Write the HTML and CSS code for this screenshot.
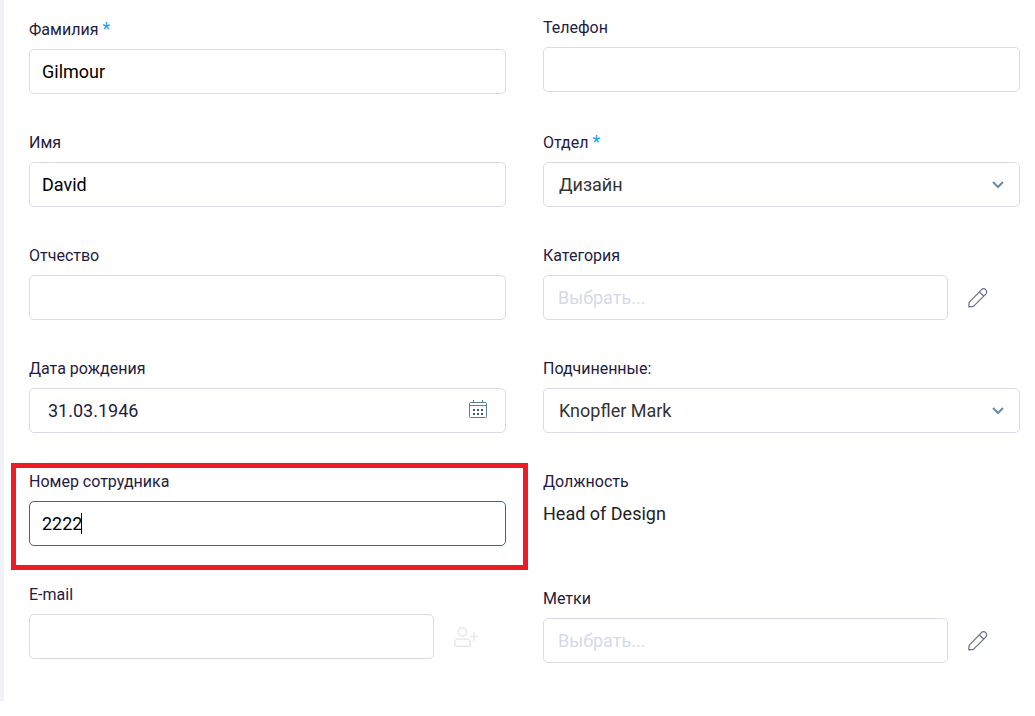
FILE: index.html
```html
<!DOCTYPE html>
<html lang="ru">
<head>
<meta charset="UTF-8">
<meta name="viewport" content="width=device-width, initial-scale=1.0">
<title>Сотрудник</title>
<link rel="stylesheet" href="styles.css">
</head>
<body>

<form class="employee-form">
    <div class="column">
        <div class="field">
            <label for="surname">Фамилия <span class="required">*</span></label>
            <input type="text" id="surname" name="surname" value="Gilmour" required>
        </div>
        <div class="field">
            <label for="name">Имя</label>
            <input type="text" id="name" name="name" value="David">
        </div>
        <div class="field">
            <label for="patronymic">Отчество</label>
            <input type="text" id="patronymic" name="patronymic">
        </div>
        <div class="field">
            <label for="birthday">Дата рождения</label>
            <div class="control">
                <input type="text" class="date" id="birthday" name="birthday" value="31.03.1946">
                <button type="button" class="calendar-button" aria-label="Календарь">
                    <svg width="18" height="20" viewBox="0 0 18 20" fill="none" stroke="#5b7f95">
                        <rect x="0.5" y="3.5" width="17" height="15" rx="1"/>
                        <path d="M1 6.500h16M4.500 1v3M13.500 1v3"/>
                        <path d="M4 11h2M8 11h2M12 11h2M4 15h2M8 15h2M12 15h2" stroke="#44566c" stroke-width="2"/>
                    </svg>
                </button>
            </div>
        </div>
        <div class="field highlight">
            <label for="number">Номер сотрудника</label>
            <div class="control">
                <input type="text" class="active" id="number" name="number" value="2222">
                <span class="caret"></span>
            </div>
        </div>
        <div class="field">
            <label for="email">E-mail</label>
            <div class="with-action">
                <input type="email" id="email" name="email">
                <button type="button" class="action" aria-label="Пригласить" disabled>
                    <svg width="24" height="20" viewBox="0 0 24 20" fill="none" stroke="#e6e8f0" stroke-width="1.5">
                        <circle cx="8.5" cy="5" r="4.2"/>
                        <path d="M0.8 19.2v-3.2c0-2.6 1.6-4 4-4h7.4c2.4 0 4 1.4 4 4v3.2zM20 5v9M16 9.500h8"/>
                    </svg>
                </button>
            </div>
        </div>
    </div>

    <div class="column column-right">
        <div class="field field-phone">
            <label for="phone">Телефон</label>
            <input type="tel" id="phone" name="phone">
        </div>
        <div class="field">
            <label for="department">Отдел <span class="required">*</span></label>
            <div class="control">
                <select id="department" name="department">
                    <option>Дизайн</option>
                </select>
                <svg class="chevron" width="12" height="8" viewBox="0 0 12 8" fill="none" stroke="#6a8ba5" stroke-width="2"><path d="M1 1l5 5 5-5"/></svg>
            </div>
        </div>
        <div class="field">
            <label for="category">Категория</label>
            <div class="with-action">
                <input type="text" class="picker" id="category" name="category" placeholder="Выбрать...">
                <button type="button" class="action" aria-label="Изменить категорию">
                    <svg width="20" height="20" viewBox="0 0 20 20" fill="none" stroke="#66708a" stroke-width="1.2" stroke-linejoin="round"><path d="M0.800 18.800l0.300-4.500L13.300 1.800c1.400-1.400 3.200-1.300 4.400-0.100s1.400 3.200 0.100 4.500L5.400 18.400zM11.300 3.900l4.600 4.400"/></svg>
                </button>
            </div>
        </div>
        <div class="field">
            <label for="subordinates">Подчиненные:</label>
            <div class="control">
                <select id="subordinates" name="subordinates">
                    <option>Knopfler Mark</option>
                </select>
                <svg class="chevron" width="12" height="8" viewBox="0 0 12 8" fill="none" stroke="#6a8ba5" stroke-width="2"><path d="M1 1l5 5 5-5"/></svg>
            </div>
        </div>
        <div class="field field-text">
            <span class="label">Должность</span>
            <span class="value">Head of Design</span>
        </div>
        <div class="field">
            <label for="tags">Метки</label>
            <div class="with-action">
                <input type="text" class="picker" id="tags" name="tags" placeholder="Выбрать...">
                <button type="button" class="action" aria-label="Изменить метки">
                    <svg width="20" height="20" viewBox="0 0 20 20" fill="none" stroke="#66708a" stroke-width="1.2" stroke-linejoin="round"><path d="M0.800 18.800l0.300-4.500L13.300 1.800c1.400-1.400 3.200-1.300 4.400-0.100s1.400 3.200 0.100 4.500L5.400 18.400zM11.300 3.900l4.600 4.400"/></svg>
                </button>
            </div>
        </div>
    </div>
</form>

</body>
</html>
```
FILE: styles.css
```css
* {
    box-sizing: border-box;
}
body {
    margin: 0;
    background-color: #fff;
    font-family: Roboto, sans-serif;
    color: #1f2041;
}
.employee-form {
    display: grid;
    grid-template-columns: 1fr 1fr;
    align-items: start;
    column-gap: 37px;
    padding: 0 15px 38px 25px;
    border-left: 4px solid #f1f2f9;
}
.column {
    display: flex;
    flex-direction: column;
    gap: 38px;
    padding-top: 19px;
}
.column-right {
    padding-top: 17px;
}
.field {
    display: flex;
    flex-direction: column;
    gap: 8px;
    position: relative;
}
.field-phone {
    margin-bottom: 2px;
}
.field-text {
    min-height: 79px;
}
label,
.label {
    font-size: 16px;
    line-height: 22px;
}
.required {
    font-size: 18px;
    line-height: 1;
    color: #18a0fb;
}
.value {
    font-size: 18px;
    line-height: 26px;
    color: #222;
}
input,
select {
    display: block;
    width: 100%;
    height: 45px;
    padding: 0 12px;
    border: 1px solid #d9dbea;
    border-radius: 5px;
    background-color: #fff;
    font-family: inherit;
    font-size: 18px;
    color: #000;
    outline: none;
}
select {
    appearance: none;
    padding: 0 40px 0 15px;
    color: #333;
}
input:focus,
input.active {
    border-color: #1079ab;
}
input.date {
    padding: 0 48px 0 18px;
    color: #1f2041;
}
input.picker {
    padding-left: 14px;
}
input::placeholder {
    color: #d5d9ea;
}
.control {
    position: relative;
}
.chevron {
    position: absolute;
    right: 16px;
    top: 19px;
    pointer-events: none;
}
.calendar-button {
    position: absolute;
    right: 19px;
    top: 11px;
}
.caret {
    position: absolute;
    left: 52px;
    top: 12px;
    width: 1px;
    height: 21px;
    background-color: #000;
}
button {
    display: flex;
    padding: 0;
    border: none;
    background: none;
    cursor: pointer;
}
.with-action {
    display: flex;
    align-items: center;
    gap: 20px;
}
.with-action input {
    flex: 1;
    min-width: 0;
}
.action {
    width: 52px;
}
/* red frame around the employee number */
.highlight::after {
    content: '';
    position: absolute;
    inset: -8px -22px -24px -18px;
    border: 5px solid #ed1c24;
    pointer-events: none;
}
```
